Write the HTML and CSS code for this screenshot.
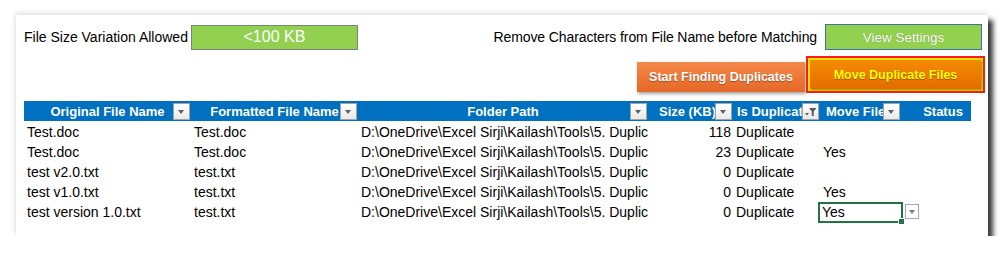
FILE: index.html
```html
<!DOCTYPE html>
<html>
<head>
<meta charset="utf-8">
<link rel="stylesheet" href="styles.css">
</head>
<body>
<div class="panel">
  <div class="top">
    <span class="label">File Size Variation Allowed</span>
    <div class="green-box">&lt;100 KB</div>
    <div class="spacer"></div>
    <span class="label label-right">Remove Characters from File Name before Matching</span>
    <div class="view-btn">View Settings</div>
  </div>
  <div class="actions">
    <div class="start-btn">Start Finding Duplicates</div>
    <div class="move-btn"><div class="move-inner">Move Duplicate Files</div></div>
  </div>
  <div class="table">
    <div class="th">Original File Name<span class="dd"></span></div>
    <div class="th">Formatted File Name<span class="dd"></span></div>
    <div class="th">Folder Path<span class="dd"></span></div>
    <div class="th th-size">Size (KB)<span class="dd"></span></div>
    <div class="th th-left">Is Duplicate<span class="dd filter"><svg width="14" height="14" viewBox="0 0 14 14"><polygon points="1,8 5,8 3,10.5" fill="#595959"/><polygon points="5,3 12.5,3 9.7,6.5 9.7,11 7.8,11 7.8,6.5" fill="#595959"/></svg></span></div>
    <div class="th th-left th-move">Move File<span class="dd"></span></div>
    <div class="th th-status">Status</div>

    <div class="td">Test.doc</div><div class="td">Test.doc</div><div class="td">D:\OneDrive\Excel Sirji\Kailash\Tools\5. Duplicate File Finder</div><div class="td num">118</div><div class="td">Duplicate</div><div class="td"></div><div class="td"></div>
    <div class="td">Test.doc</div><div class="td">Test.doc</div><div class="td">D:\OneDrive\Excel Sirji\Kailash\Tools\5. Duplicate File Finder</div><div class="td num">23</div><div class="td">Duplicate</div><div class="td">Yes</div><div class="td"></div>
    <div class="td">test v2.0.txt</div><div class="td">test.txt</div><div class="td">D:\OneDrive\Excel Sirji\Kailash\Tools\5. Duplicate File Finder</div><div class="td num">0</div><div class="td">Duplicate</div><div class="td"></div><div class="td"></div>
    <div class="td">test v1.0.txt</div><div class="td">test.txt</div><div class="td">D:\OneDrive\Excel Sirji\Kailash\Tools\5. Duplicate File Finder</div><div class="td num">0</div><div class="td">Duplicate</div><div class="td">Yes</div><div class="td"></div>
    <div class="td">test version 1.0.txt</div><div class="td">test.txt</div><div class="td">D:\OneDrive\Excel Sirji\Kailash\Tools\5. Duplicate File Finder</div><div class="td num">0</div><div class="td">Duplicate</div><div class="td selected">Yes<span class="handle"></span></div><div class="td list-cell"><span class="list-dd"></span></div>
  </div>
</div>
</body>
</html>
```

FILE: styles.css
```css
html, body {
  margin: 0;
  padding: 0;
  background: #ffffff;
}
body {
  font-family: "Liberation Sans", Arial, sans-serif;
  color: #000;
}
.panel {
  box-sizing: border-box;
  margin: 15px 0 0 16px;
  width: 972px;
  height: 221px;
  background: #fff;
  padding: 9px 3px 0 8px;
  box-shadow: 5px 5px 5px rgba(0, 0, 0, 0.78), -1px -2px 5px rgba(0, 0, 0, 0.12);
}
.top {
  display: flex;
  align-items: center;
  height: 26px;
  margin-right: 3px;
}
.label {
  font-size: 14px;
  white-space: nowrap;
}
.label-right {
  letter-spacing: -0.1px;
}
.green-box {
  box-sizing: border-box;
  margin-left: 3px;
  width: 167px;
  height: 25px;
  background: #92d050;
  border: 1px solid #7f7f7f;
  color: #fff;
  font-size: 16px;
  display: flex;
  align-items: center;
  justify-content: center;
}
.spacer { flex: 1; }
.view-btn {
  box-sizing: border-box;
  margin-left: 8px;
  width: 157px;
  height: 26px;
  background: #92d050;
  border: 1px solid #41719c;
  color: #fff;
  font-size: 13.5px;
  display: flex;
  align-items: center;
  justify-content: center;
  text-shadow: 0 0 1px rgba(0,0,0,0.3);
}
.actions {
  display: flex;
  justify-content: flex-end;
  align-items: flex-end;
  margin-top: 6px;
  height: 37px;
}
.start-btn {
  box-sizing: border-box;
  width: 168px;
  height: 30px;
  margin: 0 1px 1px 0;
  background: linear-gradient(#f5894a, #ec7433 60%, #e4682a);
  color: #fff;
  font-weight: bold;
  font-size: 12.5px;
  display: flex;
  align-items: center;
  justify-content: center;
  text-shadow: 0 1px 1px rgba(0,0,0,0.35);
  box-shadow: 1px 2px 3px rgba(0,0,0,0.35);
}
.move-btn {
  box-sizing: border-box;
  width: 179px;
  height: 37px;
  border: 2px solid #ff1a1a;
  background: #e8e800;
  padding: 2px;
}
.move-inner {
  box-sizing: border-box;
  height: 100%;
  background: linear-gradient(#f38b00, #ed7a00 55%, #e56a00);
  color: #ffff00;
  font-weight: bold;
  font-size: 12.5px;
  display: flex;
  align-items: center;
  justify-content: center;
  text-shadow: 0 1px 1px rgba(120,50,0,0.6);
  box-shadow: 1px 1px 2px rgba(0,0,0,0.4);
}
.table {
  margin-top: 8px;
  width: 947px;
  display: grid;
  grid-template-columns: 167px 167px 290px 85px 87px 83px 68px;
  grid-auto-rows: 20px;
}
.th {
  position: relative;
  background: #0070c0;
  color: #fff;
  font-weight: bold;
  font-size: 13px;
  line-height: 21px;
  text-align: center;
  white-space: nowrap;
  overflow: hidden;
}
.th-size { padding-right: 6px; }
.th-left { text-align: left; padding-left: 4px; }
.th-move { padding-left: 6px; }
.th-status { padding-left: 12px; }
.dd {
  position: absolute;
  right: 1px;
  top: 2px;
  box-sizing: border-box;
  width: 17px;
  height: 17px;
  background: linear-gradient(#ffffff, #e9e9e9);
  border: 1px solid #a3a3a3;
}
.dd::after {
  content: "";
  position: absolute;
  left: 4px;
  top: 6px;
  border-left: 3.5px solid transparent;
  border-right: 3.5px solid transparent;
  border-top: 4px solid #5f5f5f;
}
.dd.filter::after { display: none; }
.dd.filter svg {
  position: absolute;
  left: 1px;
  top: 1px;
}
.th-move .dd { right: 3px; }
.td {
  position: relative;
  font-size: 14px;
  line-height: 22px;
  padding-left: 3px;
  white-space: nowrap;
  overflow: hidden;
}
.td.num {
  text-align: right;
  padding: 0 2px 0 0;
}
.td.selected {
  overflow: visible;
  padding-left: 2px;
  z-index: 2;
}
.td.selected::before {
  content: "";
  position: absolute;
  left: -2px;
  top: 1px;
  right: 0;
  bottom: -2px;
  border: 2px solid #217346;
}
.handle {
  position: absolute;
  right: -2px;
  bottom: -4px;
  width: 5px;
  height: 5px;
  background: #217346;
  border: 1px solid #fff;
}
.td.list-cell { overflow: visible; }
.list-dd {
  position: absolute;
  left: 2px;
  top: 3px;
  box-sizing: border-box;
  width: 14px;
  height: 15px;
  background: #fff;
  border: 1px solid #a6a6a6;
}
.list-dd::after {
  content: "";
  position: absolute;
  left: 3px;
  top: 5px;
  border-left: 3.5px solid transparent;
  border-right: 3.5px solid transparent;
  border-top: 4px solid #7a7a7a;
}
```
